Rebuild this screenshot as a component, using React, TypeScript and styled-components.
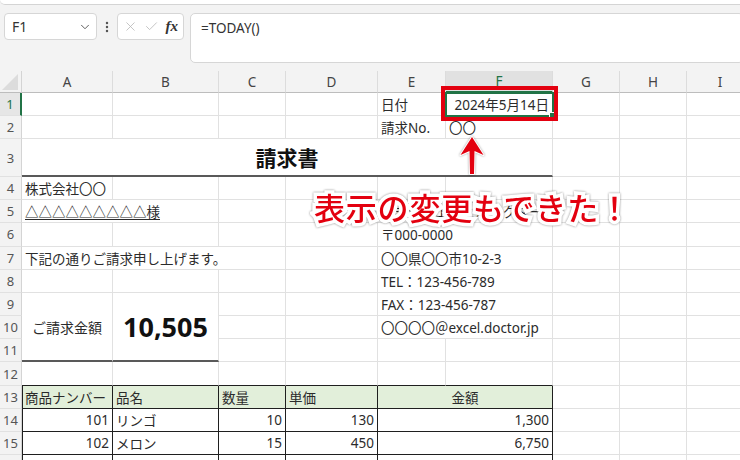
import React from 'react';
import styled, { createGlobalStyle } from 'styled-components';
import { ChevronDown, X, Check, EllipsisVertical } from 'lucide-react';

const GlobalStyle = createGlobalStyle`
  html, body {
    margin: 0;
    padding: 0;
    background: #f3f3f3;
    font-family: "Noto Sans", "Noto Sans CJK JP", sans-serif;
  }
`;

const Window = styled.div`
  position: relative;
  width: 740px;
  height: 460px;
  overflow: hidden;
  background: #f3f3f3;
`;

const RibbonEdge = styled.div`
  height: 4px;
  background: #fff;
  border-bottom: 1px solid #d4d4d4;
  border-bottom-left-radius: 6px;
`;

const FormulaRow = styled.div`
  display: flex;
  align-items: flex-start;
  padding: 8px 0 8px 4px;
  height: 50px;
`;

const NameBox = styled.div`
  box-sizing: border-box;
  width: 93px;
  height: 27px;
  display: flex;
  align-items: center;
  justify-content: space-between;
  padding: 0 4px 0 7px;
  background: #fff;
  border: 1px solid #d6d6d6;
  border-radius: 4px;
  font-size: 14px;
  color: #333;
`;

const Dots = styled.div`
  width: 20px;
  height: 27px;
  display: flex;
  align-items: center;
  justify-content: center;
  color: #555;
`;

const FuncBox = styled.div`
  box-sizing: border-box;
  width: 67px;
  height: 27px;
  display: flex;
  align-items: center;
  justify-content: space-between;
  padding: 0 5px 0 5px;
  background: #fff;
  border: 1px solid #d6d6d6;
  border-radius: 4px;
  color: #b8b8b8;
`;

const Fx = styled.span`
  font-family: "Liberation Serif", serif;
  font-style: italic;
  font-weight: 700;
  font-size: 15px;
  color: #333;
`;

const FormulaInput = styled.div`
  box-sizing: border-box;
  flex: 1;
  height: 50px;
  margin-left: 6px;
  margin-right: -4px;
  padding: 5px 10px;
  background: #fff;
  border: 1px solid #d6d6d6;
  border-radius: 5px;
  font-size: 13.5px;
  color: #333;
`;

const Sheet = styled.div`
  display: grid;
  grid-template-columns: 22px 91px 106px 67px 92px 68px 107px 67px 67px 67px;
  grid-template-rows: 22px 23.2px 23.2px 37.6px repeat(13, 23.2px);
  background: #fff;
`;

const Corner = styled.div`
  grid-column: 1;
  grid-row: 1;
  position: relative;
  background: #f3f3f3;
  border-bottom: 1px solid #bdbdbd;
  border-right: 1px solid #d4d4d4;
  &::after {
    content: '';
    position: absolute;
    right: 3px;
    bottom: 2px;
    width: 16px;
    height: 16px;
    background: #dcdcdc;
    clip-path: polygon(100% 0, 100% 100%, 0 100%);
  }
`;

const ColHead = styled.div<{ $c: number; $active?: boolean }>`
  grid-column: ${(p) => p.$c + 1};
  grid-row: 1;
  display: flex;
  align-items: center;
  justify-content: center;
  background: ${(p) => (p.$active ? '#e1e1e1' : '#f3f3f3')};
  border-right: 1px solid #dcdcdc;
  border-bottom: ${(p) => (p.$active ? '2px solid #217346' : '1px solid #bdbdbd')};
  font-size: 13.5px;
  color: ${(p) => (p.$active ? '#217346' : '#444')};
`;

const RowNum = styled.div<{ $r: number; $active?: boolean }>`
  grid-column: 1;
  grid-row: ${(p) => p.$r + 1};
  display: flex;
  align-items: center;
  justify-content: center;
  background: ${(p) => (p.$active ? '#e6e6e6' : '#f3f3f3')};
  border-right: ${(p) => (p.$active ? '2px solid #217346' : '1px solid #d4d4d4')};
  border-bottom: 1px solid #e1e1e1;
  font-size: 13px;
  color: ${(p) => (p.$active ? '#217346' : '#555')};
`;

type Pos = { $c: number; $r: number; $cs?: number; $rs?: number; $align?: string };

const Cell = styled.div<Pos & { $under?: boolean }>`
  grid-column: ${(p) => p.$c + 1} / span ${(p) => p.$cs ?? 1};
  grid-row: ${(p) => p.$r + 1} / span ${(p) => p.$rs ?? 1};
  box-sizing: border-box;
  min-width: 0;
  display: flex;
  align-items: center;
  justify-content: ${(p) => p.$align ?? 'flex-start'};
  padding: 0 3px;
  border-right: 1px solid #e1e1e1;
  border-bottom: 1px solid #e1e1e1;
  white-space: nowrap;
  font-size: 13.5px;
  color: #2b2b2b;
  text-decoration: ${(p) => (p.$under ? 'underline' : 'none')};
  text-underline-offset: 2px;
`;

const EdgeCell = styled(Cell)`
  border-bottom-color: #1f1f1f;
`;

const TitleCell = styled(Cell)`
  border-bottom: 2px solid #595959;
  font-size: 21px;
  font-weight: 700;
  color: #111;
`;

const AmountLabel = styled(Cell)`
  border-bottom: 2px solid #595959;
  font-size: 14px;
`;

const AmountValue = styled(Cell)`
  border-bottom: 2px solid #595959;
  font-size: 27px;
  font-weight: 700;
  color: #111;
`;

const DataCell = styled(Cell)<{ $first?: boolean }>`
  border-right-color: #1f1f1f;
  border-bottom-color: #1f1f1f;
  box-shadow: ${(p) => (p.$first ? 'inset 1px 0 0 #1f1f1f' : 'none')};
`;

const HeadCell = styled(DataCell)`
  background: #e2efda;
`;

const SelectedCell = styled(Cell)`
  position: relative;
  z-index: 2;
  outline: 2px solid #217346;
  outline-offset: -1px;
  &::after {
    content: '';
    position: absolute;
    right: -3px;
    bottom: -3px;
    width: 4px;
    height: 4px;
    background: #217346;
    border: 1px solid #fff;
  }
`;

const RedFrame = styled.div`
  position: absolute;
  left: 441px;
  top: 86px;
  width: 117px;
  height: 35px;
  box-sizing: border-box;
  border: 4px solid #e3000f;
  z-index: 5;
`;

const Callout = styled.div`
  position: absolute;
  left: 314px;
  top: 191px;
  z-index: 6;
  font-family: "Noto Sans CJK JP", sans-serif;
  font-size: 31px;
  font-weight: 500;
  letter-spacing: 0.8px;
  line-height: 1;
  color: #e3000f;
  -webkit-text-stroke: 7px #fff;
  paint-order: stroke fill;
  filter: drop-shadow(0 0 1px rgba(0, 0, 0, 0.45));
  white-space: nowrap;
`;

const Arrow = styled.svg`
  position: absolute;
  left: 458px;
  top: 134px;
  z-index: 6;
  filter: drop-shadow(0 0 1px rgba(0, 0, 0, 0.35));
`;

type Kind = 'text' | 'title' | 'label' | 'amount' | 'th' | 'td' | 'sel';

type Def = {
  r: number;
  c: number;
  cs?: number;
  rs?: number;
  text?: string;
  kind?: Kind;
  align?: string;
  under?: boolean;
};

const cells: Def[] = [
  { r: 1, c: 5, text: '日付' },
  { r: 1, c: 6, text: '2024年5月14日', kind: 'sel', align: 'flex-end' },
  { r: 2, c: 5, text: '請求No.' },
  { r: 2, c: 6, text: '〇〇' },
  { r: 3, c: 1, cs: 6, text: '請求書', kind: 'title', align: 'center' },
  { r: 4, c: 1, text: '株式会社〇〇' },
  { r: 5, c: 1, cs: 2, text: '△△△△△△△△△様', under: true },
  { r: 5, c: 5, cs: 2, text: '株式会社エクセルドクター' },
  { r: 6, c: 5, cs: 2, text: '〒000-0000' },
  { r: 7, c: 1, cs: 3, text: '下記の通りご請求申し上げます。' },
  { r: 7, c: 5, cs: 2, text: '〇〇県〇〇市10-2-3' },
  { r: 8, c: 5, cs: 2, text: 'TEL：123-456-789' },
  { r: 9, c: 1, rs: 3, text: 'ご請求金額', kind: 'label', align: 'center' },
  { r: 9, c: 2, rs: 3, text: '10,505', kind: 'amount', align: 'center' },
  { r: 9, c: 5, cs: 2, text: 'FAX：123-456-787' },
  { r: 10, c: 5, cs: 2, text: '〇〇〇〇＠excel.doctor.jp' },
  { r: 13, c: 1, text: '商品ナンバー', kind: 'th' },
  { r: 13, c: 2, text: '品名', kind: 'th' },
  { r: 13, c: 3, text: '数量', kind: 'th' },
  { r: 13, c: 4, text: '単価', kind: 'th' },
  { r: 13, c: 5, cs: 2, text: '金額', kind: 'th', align: 'center' },
  { r: 14, c: 1, text: '101', kind: 'td', align: 'flex-end' },
  { r: 14, c: 2, text: 'リンゴ', kind: 'td' },
  { r: 14, c: 3, text: '10', kind: 'td', align: 'flex-end' },
  { r: 14, c: 4, text: '130', kind: 'td', align: 'flex-end' },
  { r: 14, c: 5, cs: 2, text: '1,300', kind: 'td', align: 'flex-end' },
  { r: 15, c: 1, text: '102', kind: 'td', align: 'flex-end' },
  { r: 15, c: 2, text: 'メロン', kind: 'td' },
  { r: 15, c: 3, text: '15', kind: 'td', align: 'flex-end' },
  { r: 15, c: 4, text: '450', kind: 'td', align: 'flex-end' },
  { r: 15, c: 5, cs: 2, text: '6,750', kind: 'td', align: 'flex-end' },
  { r: 16, c: 1, kind: 'td' },
  { r: 16, c: 2, kind: 'td' },
  { r: 16, c: 3, kind: 'td' },
  { r: 16, c: 4, kind: 'td' },
  { r: 16, c: 5, cs: 2, kind: 'td' },
];

const kinds = {
  text: Cell,
  title: TitleCell,
  label: AmountLabel,
  amount: AmountValue,
  th: HeadCell,
  td: DataCell,
  sel: SelectedCell,
};

const COLS = ['A', 'B', 'C', 'D', 'E', 'F', 'G', 'H', 'I'];
const ROW_COUNT = 16;

function buildCells() {
  const taken = new Set<string>();
  cells.forEach((d) => {
    for (let r = d.r; r < d.r + (d.rs ?? 1); r++)
      for (let c = d.c; c < d.c + (d.cs ?? 1); c++) taken.add(`${r}-${c}`);
  });

  const out: React.ReactNode[] = cells.map((d) => {
    const Comp = kinds[d.kind ?? 'text'] as typeof DataCell;
    return (
      <Comp
        key={`${d.r}-${d.c}`}
        $r={d.r}
        $c={d.c}
        $cs={d.cs}
        $rs={d.rs}
        $align={d.align}
        $under={d.under}
        $first={d.c === 1}
      >
        {d.text}
      </Comp>
    );
  });

  for (let r = 1; r <= ROW_COUNT; r++) {
    for (let c = 1; c <= COLS.length; c++) {
      if (taken.has(`${r}-${c}`)) continue;
      // 表の上端 (12行目 A〜F) は濃い罫線
      const Comp = r === 12 && c <= 6 ? EdgeCell : Cell;
      out.push(<Comp key={`${r}-${c}`} $r={r} $c={c} />);
    }
  }
  return out;
}

export default function App() {
  return (
    <>
      <GlobalStyle />
      <Window>
        <RibbonEdge />
        <FormulaRow>
          <NameBox>
            F1
            <ChevronDown size={14} strokeWidth={1.6} color="#555" />
          </NameBox>
          <Dots>
            <EllipsisVertical size={14} strokeWidth={2.2} />
          </Dots>
          <FuncBox>
            <X size={15} strokeWidth={1.3} />
            <Check size={15} strokeWidth={1.3} />
            <Fx>fx</Fx>
          </FuncBox>
          <FormulaInput>=TODAY()</FormulaInput>
        </FormulaRow>

        <Sheet>
          <Corner />
          {COLS.map((name, i) => (
            <ColHead key={name} $c={i + 1} $active={name === 'F'}>
              {name}
            </ColHead>
          ))}
          {Array.from({ length: ROW_COUNT }, (_, i) => (
            <RowNum key={i} $r={i + 1} $active={i === 0}>
              {i + 1}
            </RowNum>
          ))}
          {buildCells()}
        </Sheet>

        <RedFrame />
        <Arrow width="28" height="42" viewBox="0 0 28 42">
          <path
            d="M14 3 L25.5 21 L16.5 17 L16 40 L12 40 L11.5 17 L2.5 21 Z"
            fill="#e3000f"
            stroke="#fff"
            strokeWidth="2"
            strokeLinejoin="round"
            paintOrder="stroke"
          />
        </Arrow>
        <Callout>表示の変更もできた！</Callout>
      </Window>
    </>
  );
}
